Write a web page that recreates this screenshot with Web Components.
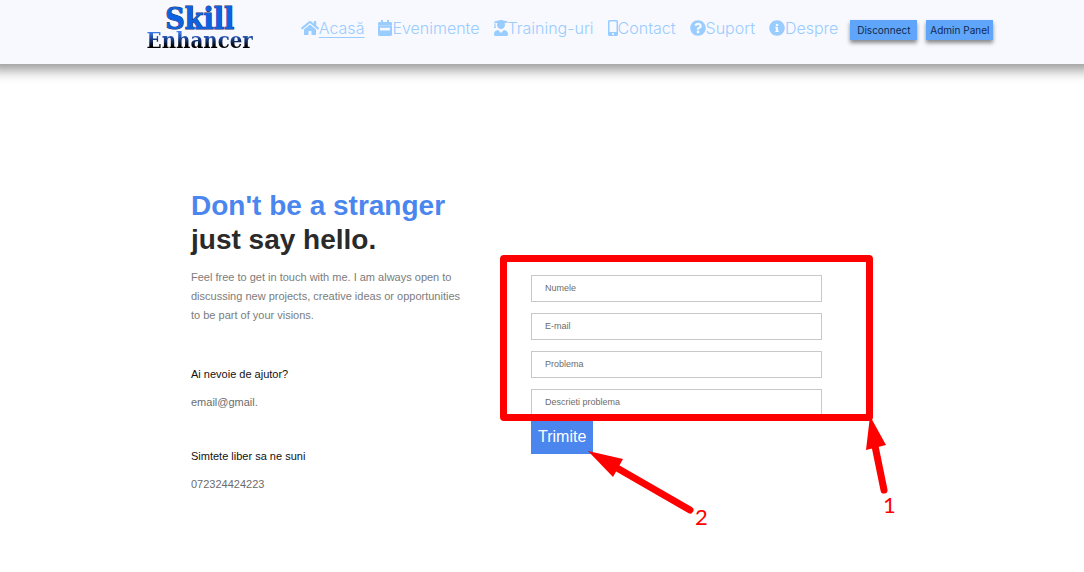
<!DOCTYPE html>
<html lang="ro">
<head>
<meta charset="utf-8">
<meta name="viewport" content="width=device-width, initial-scale=1">
<title>Skill Enhancer - Contact</title>
<style>
  body { margin: 0; background: #fff; font-family: "Liberation Sans", Arial, sans-serif; overflow-x: hidden; }
</style>
</head>
<body>
<site-header>
  <nav-link icon="home" current>Acasă</nav-link>
  <nav-link icon="calendar">Evenimente</nav-link>
  <nav-link icon="graduate">Training-uri</nav-link>
  <nav-link icon="mobile">Contact</nav-link>
  <nav-link icon="question">Suport</nav-link>
  <nav-link icon="info">Despre</nav-link>
  <header-button slot="actions">Disconnect</header-button>
  <header-button slot="actions">Admin Panel</header-button>
</site-header>
<contact-page>
  <contact-intro slot="intro">
    <span slot="accent">Don't be a stranger</span>
    <span slot="title">just say hello.</span>
    Feel free to get in touch with me. I am always open to discussing new projects, creative ideas or opportunities to be part of your visions.
  </contact-intro>
  <contact-detail slot="intro" href="mailto:email@gmail."><span slot="label">Ai nevoie de ajutor?</span>email@gmail.</contact-detail>
  <contact-detail slot="intro" href="tel:072324424223"><span slot="label">Simtete liber sa ne suni</span>072324424223</contact-detail>
  <contact-form></contact-form>
</contact-page>

<script>
const ICONS = {
  home: [576, '<path d="M280.37 148.26L96 300.11V464a16 16 0 0 0 16 16l112.06-.29a16 16 0 0 0 15.92-16V368a16 16 0 0 1 16-16h64a16 16 0 0 1 16 16v95.64a16 16 0 0 0 16 16.05L464 480a16 16 0 0 0 16-16V300L295.67 148.26a12.19 12.19 0 0 0-15.3 0zM571.6 251.47L488 182.56V44.05a12 12 0 0 0-12-12h-56a12 12 0 0 0-12 12v72.61L318.47 43a48 48 0 0 0-61 0L4.34 251.47a12 12 0 0 0-1.6 16.9l25.5 31A12 12 0 0 0 45.15 301l235.22-193.74a12.19 12.19 0 0 1 15.3 0L530.9 301a12 12 0 0 0 16.9-1.6l25.5-31a12 12 0 0 0-1.7-16.93z"/>'],
  calendar: [448, '<path fill-rule="evenodd" d="M0 160v-48c0-26 22-48 48-48h48V12c0-7 5-12 12-12h40c7 0 12 5 12 12v52h128V12c0-7 5-12 12-12h40c7 0 12 5 12 12v52h48c26 0 48 22 48 48v48zM0 192h448v272c0 26-22 48-48 48H48c-26 0-48-22-48-48zM76 244c-7 0-12 5-12 12v64c0 7 5 12 12 12h296c7 0 12-5 12-12v-64c0-7-5-12-12-12z"/><path opacity=".7" d="M0 160h448v32H0z"/>'],
  graduate: [448, '<path d="M319.4 320.6L224 416l-95.4-95.4C57.1 323.7 0 382.2 0 454.4v9.6c0 26.5 21.5 48 48 48h352c26.5 0 48-21.5 48-48v-9.6c0-72.2-57.1-130.7-128.6-133.8zM13.6 79.8l6.4 1.5v58.4c-7 4.2-12 11.5-12 20.3 0 8.4 4.6 15.4 11.1 19.7L3.5 242c-1.7 6.9 2.1 14 7.6 14h41.8c5.5 0 9.3-7.1 7.6-14l-15.6-62.3C51.4 175.4 56 168.4 56 160c0-8.8-5-16.1-12-20.3V87.1l66 15.9c-8.6 17.2-14 36.4-14 57 0 70.7 57.3 128 128 128s128-57.3 128-128c0-20.6-5.3-39.8-14-57l96.3-23.2c18.2-4.4 18.2-27.1 0-31.5l-190.4-46c-13-3.1-26.7-3.1-39.7 0L13.6 48.2c-18.1 4.4-18.1 27.2 0 31.6z"/>'],
  mobile: [320, '<path d="M272 0H48C21.5 0 0 21.5 0 48v416c0 26.5 21.5 48 48 48h224c26.5 0 48-21.5 48-48V48c0-26.5-21.5-48-48-48zM160 480c-17.7 0-32-14.3-32-32s14.3-32 32-32 32 14.3 32 32-14.3 32-32 32zm112-108c0 6.6-5.4 12-12 12H60c-6.6 0-12-5.4-12-12V60c0-6.6 5.4-12 12-12h200c6.6 0 12 5.4 12 12v312z"/>'],
  question: [512, '<path d="M504 256c0 136.997-111.043 248-248 248S8 392.997 8 256C8 119.083 119.043 8 256 8s248 111.083 248 248zM262.655 90c-54.497 0-89.255 22.957-116.549 63.758-3.536 5.286-2.353 12.415 2.715 16.258l34.699 26.31c5.205 3.947 12.621 3.008 16.665-2.122 17.864-22.658 30.113-35.797 57.303-35.797 20.429 0 45.698 13.148 45.698 32.958 0 14.976-12.363 22.667-32.534 33.976C247.128 238.528 216 254.941 216 296v4c0 6.627 5.373 12 12 12h56c6.627 0 12-5.373 12-12v-1.333c0-28.462 83.186-29.647 83.186-106.667 0-58.002-60.165-102-116.531-102zM256 338c-25.365 0-46 20.635-46 46 0 25.364 20.635 46 46 46s46-20.636 46-46c0-25.365-20.635-46-46-46z"/>'],
  info: [512, '<path d="M256 8C119.043 8 8 119.083 8 256c0 136.997 111.043 248 248 248s248-111.003 248-248C504 119.083 392.957 8 256 8zm0 110c23.196 0 42 18.804 42 42s-18.804 42-42 42-42-18.804-42-42 18.804-42 42-42zm56 254c0 6.627-5.373 12-12 12h-88c-6.627 0-12-5.373-12-12v-24c0-6.627 5.373-12 12-12h12v-64h-12c-6.627 0-12-5.373-12-12v-24c0-6.627 5.373-12 12-12h64c6.627 0 12 5.373 12 12v100h12c6.627 0 12 5.373 12 12v24z"/>']
};

function define(name, render) {
  customElements.define(name, class extends HTMLElement {
    constructor() {
      super();
      this.attachShadow({ mode: "open" });
    }
    connectedCallback() {
      this.shadowRoot.innerHTML = render(this);
    }
  });
}

define("brand-logo", () => `
  <style>
    :host { display: block; }
    a { display: flex; flex-direction: column; align-items: center; text-decoration: none; }
    .top { font: bold 30px/24px "DejaVu Serif Condensed", "DejaVu Serif", serif; color: #0d62e2;
      -webkit-text-stroke: 1px #1c2f66; paint-order: stroke fill; }
    .bottom { font: bold 22px/18px "DejaVu Serif Condensed", "DejaVu Serif", serif; color: transparent;
      background: linear-gradient(#3f7df0 5%, #1b3f8c 45%, #000 85%); background-clip: text; -webkit-background-clip: text; }
  </style>
  <a href="#"><span class="top">Skill</span><span class="bottom">Enhancer</span></a>`);

define("nav-link", el => {
  const [w, shape] = ICONS[el.getAttribute("icon")];
  return `
  <style>
    :host { display: block; }
    a { display: flex; align-items: center; color: #99ccff; text-decoration: none; font: 300 16px/24px Inter, sans-serif; }
    svg { height: 16px; fill: currentColor; flex: none; }
    :host([current]) span { text-decoration: underline; text-underline-offset: 3px; }
  </style>
  <a href="#"><svg viewBox="0 0 ${w} 512" width="${w / 32}" aria-hidden="true">${shape}</svg><span><slot></slot></span></a>`;
});

define("header-button", () => `
  <style>
    :host { display: block; }
    button { width: 67px; height: 20px; padding: 0; border: 0; background: #5fa5f9; color: #102a52;
      font: 10px/20px Inter, sans-serif; white-space: nowrap; box-shadow: 0 3px 4px rgba(0,0,0,.45); cursor: pointer; }
  </style>
  <button type="button"><slot></slot></button>`);

define("site-header", () => `
  <style>
    :host { display: block; }
    header { display: flex; align-items: center; justify-content: center; height: 64px; padding-left: 56px;
      box-sizing: border-box; background: #f8f9ff; box-shadow: 0 -6px 12px 12px rgba(0,0,0,.41); }
    brand-logo { align-self: flex-start; padding-top: 7px; margin-right: 48px; }
    nav { display: flex; gap: 14px; margin-bottom: 8px; }
    .actions { display: flex; gap: 9px; margin-left: 12px; margin-bottom: 4px; }
  </style>
  <header>
    <brand-logo></brand-logo>
    <nav><slot></slot></nav>
    <div class="actions"><slot name="actions"></slot></div>
  </header>`);

define("contact-page", () => `
  <style>
    :host { display: block; }
    main { display: grid; grid-template-columns: 340px 1fr; max-width: 702px; margin: 0 auto; padding: 125px 16px 72px; }
    .form { padding-top: 86px; }
  </style>
  <main>
    <section><slot name="intro"></slot></section>
    <section class="form"><slot></slot></section>
  </main>`);

define("contact-intro", () => `
  <style>
    :host { display: block; max-width: 272px; }
    h1 { margin: 0; font-size: 28px; line-height: 34px; color: #2a2a2a; white-space: nowrap; }
    .accent { display: block; color: #4a86ee; }
    p { margin: 11px 0 0; padding-bottom: 4px; font-size: 11px; line-height: 19px; color: #7c7c7c; }
  </style>
  <h1><span class="accent"><slot name="accent"></slot></span><slot name="title"></slot></h1>
  <p><slot></slot></p>`);

define("contact-detail", el => `
  <style>
    :host { display: block; margin-top: 36px; font-size: 11px; line-height: 18px; }
    h2 { margin: 0 0 10px; font: inherit; color: #111; }
    a { display: block; color: #6c6c6c; text-decoration: none; }
  </style>
  <h2><slot name="label"></slot></h2>
  <a href="${el.getAttribute("href")}"><slot></slot></a>`);

define("callout-marks", () => `
  <style>
    :host { display: block; position: relative; font: 22px/24px Lato, sans-serif; color: #f00; }
    .frame { position: absolute; inset: -20px -51px -5px -31px; border: 7px solid #f00; border-radius: 4px; pointer-events: none; z-index: 1; }
    svg { position: absolute; left: 0; top: 0; width: 400px; height: 260px; fill: #f00; stroke: #f00; overflow: visible; pointer-events: none; z-index: 2; }
    b { position: absolute; font-weight: normal; }
    .one { left: 352px; top: 218px; }
    .two { left: 164px; top: 230px; }
  </style>
  <slot></slot>
  <div class="frame"></div>
  <svg viewBox="0 0 400 260" aria-hidden="true">
    <path stroke="none" d="M339 141L335 175 355 170zM57 176L92 184 82 202z"/>
    <path fill="none" stroke-width="7" stroke-linecap="round" d="M344 171L353 215M86 193L159 235"/>
  </svg>
  <b class="one">1</b>
  <b class="two">2</b>`);

define("contact-form", () => `
  <style>
    :host { display: block; }
    form { width: 291px; display: flex; flex-direction: column; align-items: flex-start; gap: 5px; }
    callout-marks { width: 100%; }
    .fields { display: grid; gap: 11px; }
    input, textarea { display: block; width: 100%; height: 27px; box-sizing: border-box; margin: 0; padding: 0 13px 2px;
      border: 1px solid #c8c8c8; border-radius: 0; background: #fff; color: #333; font: 9px/25px "Liberation Sans", Arial, sans-serif; resize: none; overflow: hidden; }
    ::placeholder { color: #6c6c6c; opacity: 1; }
    button { height: 33px; padding: 0 7px 2px; border: 0; background: #4a86ee; color: #fff; font: 16px/24px "Liberation Sans", Arial, sans-serif; cursor: pointer; }
  </style>
  <form>
    <callout-marks>
      <div class="fields">
        <input type="text" placeholder="Numele" aria-label="Numele">
        <input type="email" placeholder="E-mail" aria-label="E-mail">
        <input type="text" placeholder="Problema" aria-label="Problema">
        <textarea rows="1" placeholder="Descrieti problema" aria-label="Descrieti problema"></textarea>
      </div>
    </callout-marks>
    <button type="button">Trimite</button>
  </form>`);
</script>
</body>
</html>
